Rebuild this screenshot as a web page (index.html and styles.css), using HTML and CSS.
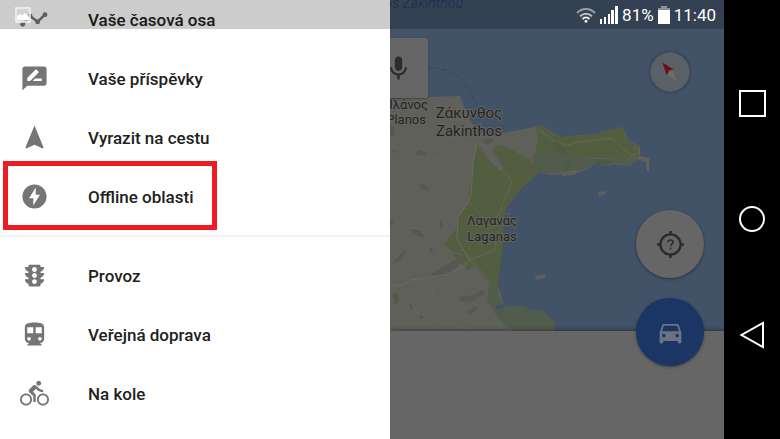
FILE: index.html
```html
<!DOCTYPE html>
<html lang="cs">
<head>
    <meta charset="UTF-8">
    <meta name="viewport" content="width=device-width, initial-scale=1.0">
    <title>Mapy</title>
    <link rel="stylesheet" href="styles.css">
</head>
<body>

    <div class="screen">
        <!-- Side menu -->
        <nav class="drawer">
            <div class="menu-group menu-scrolled">
                <a class="menu-item" href="#">
                    <svg class="icon" viewBox="0 0 24 24"><path d="M2.200 16l6.100-6.900 6.300 4.700L20.700 8" fill="none" stroke="currentColor" stroke-width="2"/><circle cx="2.200" cy="16" r="2"/><circle cx="8.300" cy="9.100" r="2"/><circle cx="14.600" cy="14" r="2"/><circle cx="20.700" cy="8" r="2"/></svg>
                    <span>Vaše časová osa</span>
                </a>
                <a class="menu-item" href="#">
                    <svg class="icon" viewBox="0 0 24 24"><path d="M20 2H4c-1.100 0-2 .9-2 2v18l4-4h14c1.100 0 2-.9 2-2V4c0-1.100-.9-2-2-2zM6 14v-2.470l6.880-6.880c.2-.2.510-.2.710 0l1.770 1.770c.2.2.2.510 0 .71L8.470 14H6zm12 0h-7.500l2-2H18v2z"/></svg>
                    <span>Vaše příspěvky</span>
                </a>
                <a class="menu-item" href="#">
                    <svg class="icon" viewBox="0 0 24 24"><path d="M12 2L4.500 20.290l.71.71L12 18l6.790 3 .71-.71z"/></svg>
                    <span>Vyrazit na cestu</span>
                </a>
                <a class="menu-item highlighted" href="#">
                    <svg class="icon" viewBox="0 0 24 24"><path d="M12 2C6.480 2 2 6.480 2 12s4.480 10 10 10 10-4.480 10-10S17.520 2 12 2zm-1 17.500v-6H7.500L13 4.500v6h3.500z"/></svg>
                    <span>Offline oblasti</span>
                </a>
            </div>

            <div class="menu-group">
                <a class="menu-item" href="#">
                    <svg class="icon" viewBox="0 0 24 24"><path d="M20 10h-3V8.860c1.720-.45 3-2 3-3.860h-3V4c0-.55-.45-1-1-1H8c-.55 0-1 .45-1 1v1H4c0 1.860 1.280 3.410 3 3.860V10H4c0 1.860 1.280 3.410 3 3.860V15H4c0 1.860 1.280 3.410 3 3.860V20c0 .55.45 1 1 1h8c.55 0 1-.45 1-1v-1.140c1.720-.45 3-2 3-3.860h-3v-1.140c1.720-.45 3-2 3-3.860zm-8 9c-1.110 0-2-.9-2-2s.89-2 2-2c1.100 0 2 .9 2 2s-.89 2-2 2zm0-5c-1.110 0-2-.9-2-2s.89-2 2-2c1.100 0 2 .9 2 2s-.89 2-2 2zm0-5c-1.110 0-2-.9-2-2 0-1.110.89-2 2-2 1.100 0 2 .89 2 2 0 1.100-.89 2-2 2z"/></svg>
                    <span>Provoz</span>
                </a>
                <a class="menu-item" href="#">
                    <svg class="icon" viewBox="0 0 24 24"><path d="M12 2c-4.420 0-8 .5-8 4v9.500C4 17.430 5.570 19 7.500 19L6 20.500v.5h12v-.5L16.500 19c1.930 0 3.500-1.570 3.500-3.500V6c0-3.500-3.580-4-8-4zM7.500 17c-.83 0-1.500-.67-1.500-1.500S6.670 14 7.500 14s1.500.67 1.500 1.500S8.330 17 7.500 17zm3.500-6H6V6h5v5zm5.500 6c-.83 0-1.500-.67-1.500-1.500s.67-1.500 1.500-1.500 1.500.67 1.500 1.500-.67 1.500-1.500 1.500zm1.500-6h-5V6h5v5z"/></svg>
                    <span>Veřejná doprava</span>
                </a>
                <a class="menu-item" href="#">
                    <svg class="icon" viewBox="0 0 24 24"><path d="M15.500 5.500c1.100 0 2-.9 2-2s-.9-2-2-2-2 .9-2 2 .9 2 2 2zM5 12c-2.800 0-5 2.200-5 5s2.200 5 5 5 5-2.200 5-5-2.200-5-5-5zm0 8.500c-1.900 0-3.500-1.600-3.500-3.500s1.600-3.500 3.500-3.500 3.500 1.600 3.500 3.500-1.600 3.500-3.500 3.500zm5.800-10l2.400-2.400.8.8c1.300 1.300 3 2.100 5.100 2.100V9c-1.500 0-2.700-.6-3.600-1.500l-1.900-1.900c-.5-.4-1-.6-1.600-.6s-1.100.2-1.400.6L7.800 8.400c-.4.4-.6.9-.6 1.400 0 .6.2 1.100.6 1.400L11 14v5h2v-6.200l-2.200-2.300zM19 12c-2.800 0-5 2.200-5 5s2.200 5 5 5 5-2.200 5-5-2.200-5-5-5zm0 8.500c-1.900 0-3.500-1.600-3.500-3.500s1.600-3.500 3.500-3.500 3.500 1.600 3.500 3.500-1.600 3.500-3.500 3.500z"/></svg>
                    <span>Na kole</span>
                </a>
            </div>
        </nav>

        <!-- Map -->
        <main class="map-panel">
            <svg class="map" viewBox="0 0 334 331" preserveAspectRatio="xMinYMin slice">
                <rect width="334" height="331" fill="#425267"/>
                <path fill="#60605b" d="M0 99L38 97l32-1 4 10 8 17 5 8 8 2h18l32-6 5-2 21 12 33-3 29-7 5 13 12 6v11l9 2v12h-2l-1-9-8-2-9 6-13-2-14 2-3-5-13 9-17 4-18 1-12-3-20 18-15 20-2 33-5 40 8 24 17-1 10 5 9-1 14 13-3 8H0z"/>
                <!-- fields and woods -->
                <path fill="#535e40" d="M87 143l10 15 13 13 4-3-11-16 2-6 8-1 27 15 10 12-20 18-15 20-2 33-5 40v5l-8-3-13-17-15-3-18-21 14-17v-10l10-14 5-43z"/>
                <path fill="#535e40" d="M149 125l21 12 33-3 29-7 5 13 12 6v11l-15 2-40-2-49-4 3-13-2-12z"/>
                <path fill="#525c4c" d="M143 154l24-1 37 6h45l-9 6-13-2-14 2-3-5-13 9-17 2-18 3-12-2-7-8z"/>
                <path fill="#4a5642" d="M163 138l12 10 3 8-12-5zM176 160l6 2-5 9-4-4zM205 159l17 2-6 5-8-4z" opacity=".6"/>
                <path fill="#525c4c" d="M99 284l9 4 1 8 7 11 17-1 10 5 9-1 14 13-3 8h-40l-16-14-10-17z"/>
                <path fill="#425267" d="M105 306l8-2 1 4-7 2z"/>
                <g fill="#505a49">
                    <path d="M2 294l6-2 1 9-4 4zM50 220l4 6-4 2zM40 247l4 4-5 2zM19 303l4 3-2 5zM28 317l5-2v4zM0 219l4 3-4 5zM74 267l7-1-2 5zM0 126l5 2-1 8-4-1z"/>
                </g>
                <!-- hills -->
                <g fill="#585753">
                    <path d="M2 263l12-12 3 1-8 9zM40 275l15-9 14-9 4 3-9 10-12 7zM67 297l16-2 9-5 3 3-14 9-10-1zM24 154l5-4 8 3-4 3zM2 151l5-1-2 4zM18 228l12 3 6 7-10-3zM92 141l8-4 4 3-7 5zM76 312l9-6 3 2-8 7zM29 184l7 1 3 6-8-2z"/>
                </g>
                <!-- roads -->
                <g fill="none" stroke="#6b6b66" stroke-width="1">
                    <path d="M87 143l-4 20-2 32-3 8-10 14-1 22 7 12 6 9-13 10-12 5-34 5-8 5H0"/>
                    <path d="M80 260l7 6 15 19M80 260l25-10 1-15M106 220l16-38-4-6-13-13-8-16-10-4M78 201l16 17M54 249l18 6" opacity=".6"/>
                    <path d="M86 142l-18 5-22 12-19 14M0 196l13-2 15-14 12-17 10-5M0 223l20 5 30 3 10 12M42 281l1 18-9 10M15 290l12 23 24 8 14 6 13 1" opacity=".4"/>
                    <path d="M148 129l15 11 13 6 8-3 20-3 18-2 12 12 9 6 7-5-6-4" stroke="#6a6b58" opacity=".7"/>
                    <path d="M249 157l9 2v12" stroke="#65635d" stroke-width="2"/>
                </g>
                <path fill="#60605b" d="M145 276l10-2v4l-9 2zM208 192l7-1 1 3-7 2zM172 174l14-2 6-3-8 6-12 1z"/>
                <path d="M38 67l18 3c14 4 22 18 28 30l4 7" fill="none" stroke="#36475f" stroke-width="1" stroke-dasharray="5 2"/>
                <text class="sea-label" x="73" y="8" text-anchor="end">os Zakinthou</text>
                <g class="town-small" text-anchor="end">
                    <text x="38" y="109">Πλάνος</text>
                    <text x="36" y="124">Planos</text>
                </g>
                <g class="town" text-anchor="middle">
                    <text x="79" y="118">Ζάκυνθος</text>
                    <text x="79" y="136">Zakinthos</text>
                </g>
                <g class="town-small" text-anchor="middle">
                    <text x="102" y="225">Λαγανάς</text>
                    <text x="102" y="241">Laganas</text>
                </g>
            </svg>

            <div class="bottom-sheet"></div>

            <button class="voice-button" aria-label="Hlasové vyhledávání">
                <svg class="icon" viewBox="0 0 24 24"><path d="M12 14c1.660 0 3-1.340 3-3V5c0-1.660-1.340-3-3-3S9 3.340 9 5v6c0 1.660 1.340 3 3 3zm5.300-3c0 3-2.540 5.100-5.300 5.100S6.700 14 6.700 11H5c0 3.410 2.720 6.230 6 6.720V21h2v-3.280c3.280-.48 6-3.300 6-6.720h-1.700z"/></svg>
            </button>

            <button class="compass" aria-label="Kompas">
                <svg viewBox="0 0 40 40"><path d="M23 18l4 12-11-8z" fill="#6f6c67"/><path d="M12 10l12 7.500-4.500.5-3 5.500z" fill="#6b0f10"/></svg>
            </button>

            <div class="fab-stack">
                <button class="fab" aria-label="Moje poloha">
                    <svg class="icon" viewBox="0 0 30 30"><circle cx="15" cy="15" r="10.500" fill="none" stroke="currentColor" stroke-width="2.400"/><path d="M15 1v4M15 25v4M1 15h4M25 15h4" stroke="currentColor" stroke-width="2.600"/><path d="M12.300 12.800c0-1.600 1.200-2.500 2.700-2.500s2.700.9 2.700 2.300c0 1.800-2.600 2-2.600 4.200M15.100 18.200v2" fill="none" stroke="currentColor" stroke-width="1.700"/></svg>
                </button>
                <button class="fab fab-blue" aria-label="Trasa">
                    <svg class="icon" viewBox="0 0 24 24"><path d="M18.920 6.010C18.720 5.420 18.160 5 17.500 5h-11c-.66 0-1.210.42-1.420 1.010L3 12v8c0 .55.45 1 1 1h1c.55 0 1-.45 1-1v-1h12v1c0 .55.45 1 1 1h1c.55 0 1-.45 1-1v-8l-2.080-5.990zM6.500 16c-.83 0-1.500-.67-1.500-1.500S5.670 13 6.500 13s1.500.67 1.500 1.500S7.330 16 6.500 16zm11 0c-.83 0-1.500-.67-1.500-1.500s.67-1.500 1.500-1.500 1.500.67 1.500 1.500-.67 1.500-1.500 1.500zM5 11l1.500-4.500h11L19 11H5z"/></svg>
                </button>
            </div>
        </main>

        <!-- Phone buttons -->
        <aside class="system-nav">
            <button aria-label="Poslední aplikace"><svg viewBox="0 0 40 40"><rect x="8" y="8" width="25" height="25"/></svg></button>
            <button aria-label="Domů"><svg viewBox="0 0 40 40"><circle cx="20" cy="20" r="12"/></svg></button>
            <button aria-label="Zpět"><svg viewBox="0 0 40 40"><path d="M31 8v24L9.500 20z"/></svg></button>
        </aside>

        <header class="status-bar">
            <svg class="status-picture" viewBox="0 0 16 16"><rect x="1" y="1" width="14" height="14" fill="#d8d8d8" fill-opacity=".6" stroke="#f2f2f2" stroke-width="1.500"/><path d="M2 13V9l3-2 2 1.500L10 6l4 4v3z" fill="#fff"/></svg>
            <div class="status-info">
                <svg class="wifi" viewBox="0 0 20 16"><g fill="none" stroke-width="2"><path d="M1 6c5-5.300 13-5.300 18 0" stroke="#9aa0a8"/><path d="M4 9.300c3.500-3.500 8.500-3.500 12 0" stroke="#b9bec4"/><path d="M6.600 12c2-2 4.800-2 6.800 0" stroke="#fff"/></g><circle cx="10" cy="14.300" r="1.400" fill="#fff"/></svg>
                <svg class="signal" viewBox="0 0 18 18"><path d="M0 13h2v5H0zM4 11h2v7H4zM8 8h2v10H8zM11 4h3v14h-3zM15 0h3v18h-3z" fill="#fff"/></svg>
                <span>81%</span>
                <svg class="battery" viewBox="0 0 12 18"><path d="M3 0h6v2h3v4H0V2h3z" fill="#8a9098"/><path d="M0 4h12v14H0z" fill="#fff"/></svg>
                <span>11:40</span>
            </div>
        </header>
    </div>

</body>
</html>
```
FILE: styles.css
```css
body {
    font-family: Roboto, sans-serif;
    background-color: #000;
    margin: 0;
}

button {
    border: none;
    padding: 0;
    cursor: pointer;
}

.screen {
    position: relative;
    display: grid;
    grid-template-columns: 50% 1fr 56px;
    height: 100vh;
    overflow: hidden;
}

.icon {
    display: block;
    flex: none;
    width: 29px;
    height: 29px;
    fill: currentColor;
}

/* Side menu */
.drawer {
    background-color: #fff;
    overflow: hidden;
}

.menu-group {
    padding: 9px 0;
}

/* the list is scrolled under the status bar */
.menu-scrolled {
    margin-top: -19px;
    border-bottom: 2px solid #f2f2f2;
}

.menu-item {
    position: relative;
    display: flex;
    align-items: center;
    gap: 39px;
    height: 59px;
    padding-left: 20px;
    color: #212121;
    font-size: 17px;
    font-weight: 500;
    text-decoration: none;
}

.menu-item .icon {
    color: #757575;
}

.highlighted::after {
    content: "";
    position: absolute;
    top: -6px;
    bottom: -4px;
    left: 3px;
    width: 204px;
    border: 5px solid #ed1c24;
}

/* Map */
.map-panel {
    position: relative;
    display: flex;
    flex-direction: column;
    overflow: hidden;
}

.map {
    display: block;
    flex: 1;
    width: 100%;
    min-height: 0;
}

.map text {
    paint-order: stroke;
    stroke: #64645f;
    stroke-width: 2px;
    fill: #262421;
}

.town {
    font-size: 15px;
}

.town-small {
    font-size: 13px;
}

.map .sea-label {
    font-size: 14px;
    font-style: italic;
    fill: #2a3f66;
    stroke: none;
}

.bottom-sheet {
    position: relative;
    height: 108px;
    background-color: #666;
    box-shadow: 0 -1px 4px rgba(0, 0, 0, 0.4);
}

.voice-button {
    position: absolute;
    top: 38px;
    left: -22px;
    display: flex;
    align-items: center;
    justify-content: center;
    width: 60px;
    height: 60px;
    background-color: #666;
    color: #2b2b2b;
    border-radius: 2px;
    box-shadow: 0 1px 2px rgba(0, 0, 0, 0.3);
}

.compass {
    position: absolute;
    top: 52px;
    right: 34px;
    width: 40px;
    height: 40px;
    background-color: #596068;
    border: 1px solid #56585b;
    border-radius: 50%;
    box-shadow: 0 0 3px rgba(0, 0, 0, 0.4);
}

.compass svg {
    display: block;
}

.fab-stack {
    position: absolute;
    right: 20px;
    bottom: 73px;
    display: flex;
    flex-direction: column;
    gap: 20px;
}

.fab {
    display: flex;
    align-items: center;
    justify-content: center;
    width: 68px;
    height: 68px;
    background-color: #666;
    color: #2b2b2b;
    border-radius: 50%;
    box-shadow: 0 1px 3px rgba(0, 0, 0, 0.4);
}

.fab-blue {
    background-color: #1b3664;
    color: #6b7280;
}

/* Phone buttons */
.system-nav {
    display: flex;
    flex-direction: column;
    align-items: center;
    justify-content: center;
    gap: 76px;
    padding-bottom: 2px;
    background-color: #000;
}

.system-nav button {
    width: 40px;
    height: 40px;
    background: none;
}

.system-nav svg {
    display: block;
    fill: none;
    stroke: #fff;
    stroke-width: 2;
}

/* Status bar */
.status-bar {
    position: absolute;
    top: 0;
    left: 0;
    right: 56px;
    display: flex;
    align-items: center;
    justify-content: space-between;
    box-sizing: border-box;
    height: 29px;
    padding: 0 8px 0 15px;
    background-color: rgba(0, 0, 0, 0.2);
    color: #fff;
    font-size: 17px;
}

.status-picture {
    width: 16px;
    height: 16px;
}

.status-info {
    display: flex;
    align-items: center;
    gap: 4px;
}

.wifi {
    width: 20px;
    height: 16px;
}

.signal {
    width: 18px;
    height: 18px;
}

.battery {
    width: 12px;
    height: 18px;
}
```
